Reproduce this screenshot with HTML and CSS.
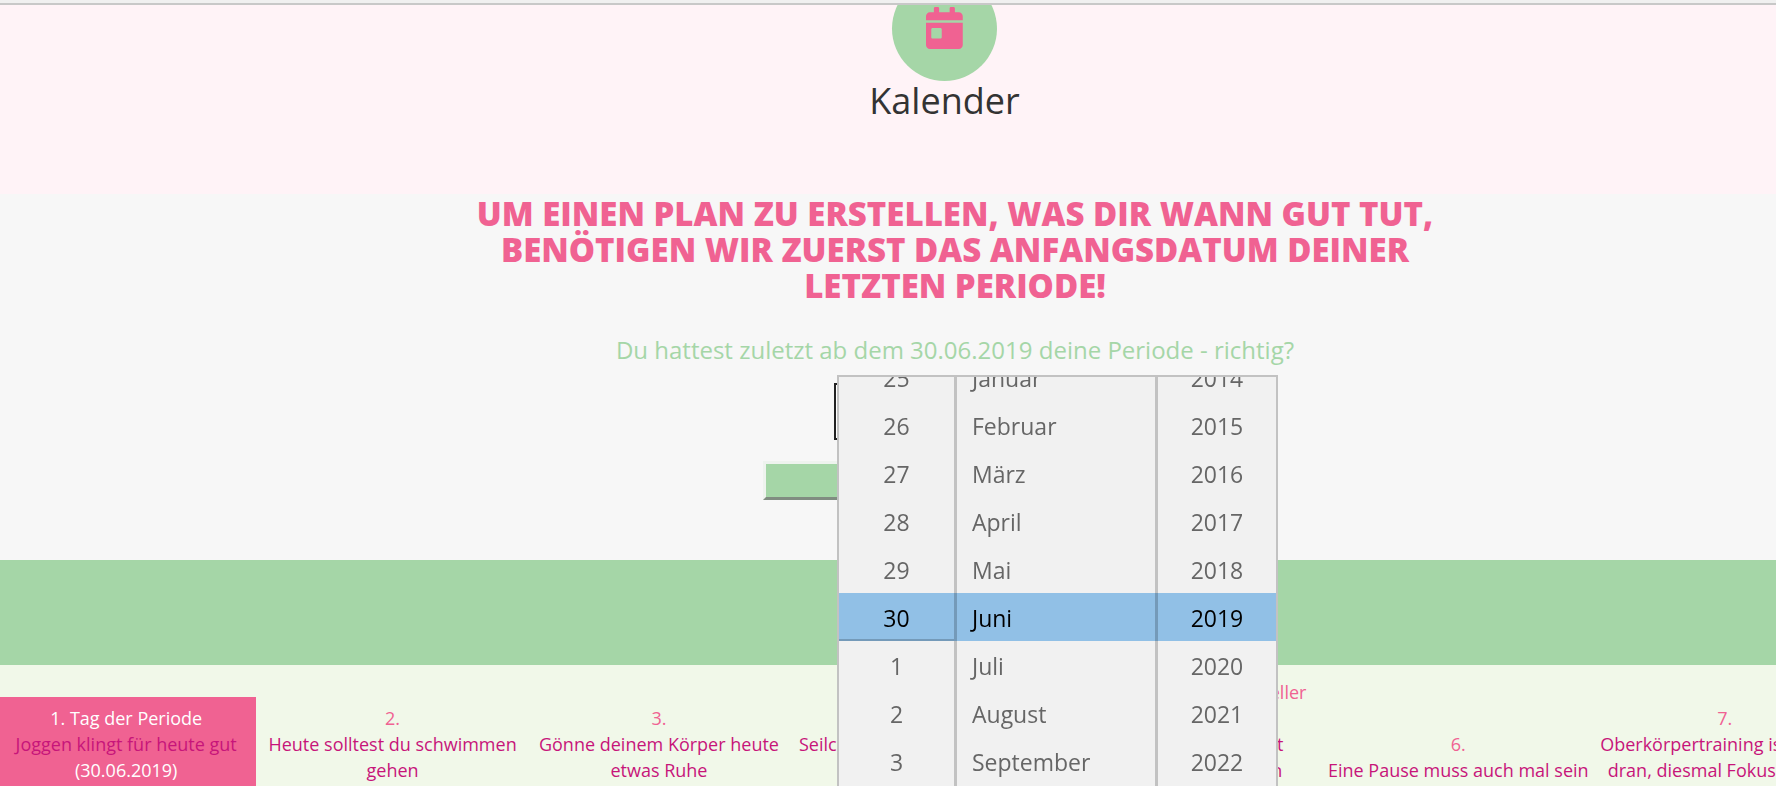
FILE: index.html
```html
<!DOCTYPE html>
<html lang="de">
<head>
<meta charset="utf-8">
<meta name="viewport" content="width=device-width, initial-scale=1">
<title>Kalender</title>
<link rel="stylesheet" href="styles.css">
</head>
<body>
<div class="topbar"></div>
<main class="page">
  <header class="hero">
    <div class="hero-badge">
      <svg class="hero-icon" viewBox="0 0 448 512" aria-hidden="true"><path fill="currentColor" d="M0 464c0 26.500 21.500 48 48 48h352c26.500 0 48-21.500 48-48V192H0v272zm64-192c0-8.800 7.200-16 16-16h96c8.800 0 16 7.200 16 16v96c0 8.800-7.200 16-16 16H80c-8.800 0-16-7.200-16-16v-96zM400 64h-48V16c0-8.800-7.200-16-16-16h-32c-8.800 0-16 7.200-16 16v48H160V16c0-8.800-7.200-16-16-16h-32c-8.800 0-16 7.200-16 16v48H48C21.500 64 0 85.500 0 112v48h448v-48c0-26.500-21.500-48-48-48z"/></svg>
    </div>
    <h1 class="hero-title">Kalender</h1>
  </header>

  <section class="plan">
    <h2 class="plan-title">Um einen Plan zu erstellen, was dir wann gut tut, benötigen wir zuerst das Anfangsdatum deiner letzten Periode!</h2>
    <form class="plan-form">
      <label class="plan-question" for="start">Du hattest zuletzt ab dem 30.06.2019 deine Periode - richtig?</label>
      <div class="date-field">
        <input class="date-input" id="start" type="text" value="30.06.2019">
        <div class="picker">
          <div class="picker-col">
            <button type="button" class="option">25</button>
            <button type="button" class="option">26</button>
            <button type="button" class="option">27</button>
            <button type="button" class="option">28</button>
            <button type="button" class="option">29</button>
            <button type="button" class="option option-selected option-focus">30</button>
            <button type="button" class="option">1</button>
            <button type="button" class="option">2</button>
            <button type="button" class="option">3</button>
          </div>
          <div class="picker-col picker-months">
            <button type="button" class="option">Januar</button>
            <button type="button" class="option">Februar</button>
            <button type="button" class="option">März</button>
            <button type="button" class="option">April</button>
            <button type="button" class="option">Mai</button>
            <button type="button" class="option option-selected">Juni</button>
            <button type="button" class="option">Juli</button>
            <button type="button" class="option">August</button>
            <button type="button" class="option">September</button>
          </div>
          <div class="picker-col">
            <button type="button" class="option">2014</button>
            <button type="button" class="option">2015</button>
            <button type="button" class="option">2016</button>
            <button type="button" class="option">2017</button>
            <button type="button" class="option">2018</button>
            <button type="button" class="option option-selected">2019</button>
            <button type="button" class="option">2020</button>
            <button type="button" class="option">2021</button>
            <button type="button" class="option">2022</button>
          </div>
          <div class="picker-highlight"></div>
        </div>
      </div>
      <button class="submit" type="submit" aria-label="Plan erstellen"></button>
    </form>
  </section>

  <div class="band"></div>

  <section class="days">
    <article class="day day-first"><span class="day-number">1. Tag der Periode</span><br>Joggen klingt für heute gut<br><span class="day-number">(30.06.2019)</span></article>
    <article class="day"><span class="day-number">2.</span><br>Heute solltest du schwimmen<br>gehen</article>
    <article class="day"><span class="day-number">3.</span><br>Gönne deinem Körper heute<br>etwas Ruhe</article>
    <article class="day"><span class="day-number">4.</span><br>Seilchenspringen ist heute gut<br>für dich</article>
    <article class="day"><span class="day-number">5. Tag, Heute dein aktueller<br>Tag</span><br>Heute solltest du Rast<br>einlegen oder einfach</article>
    <article class="day"><span class="day-number">6.</span><br>Eine Pause muss auch mal sein</article>
    <article class="day"><span class="day-number">7.</span><br>Oberkörpertraining ist wieder<br>dran, diesmal Fokus Rücken</article>
  </section>
</main>
</body>
</html>
```
FILE: styles.css
```css
* {
  box-sizing: border-box;
}

body {
  margin: 0;
  height: 100vh;
  overflow: hidden;
  background: #f1f8e9;
  color: #333;
  font-family: "Open Sans", "Noto Sans", sans-serif;
  font-size: 18px;
  line-height: 26px;
}

.topbar {
  height: 5px;
  background: #f0f0f0;
  border-bottom: 2px solid #c8c8c8;
}

/* The page is wider than the window and runs off its right edge. */
.page {
  width: calc(100% + 113px);
}

.hero {
  display: flex;
  flex-direction: column;
  align-items: center;
  overflow: hidden;
  padding-bottom: 73px;
  background: #fff3f7;
}

.hero-badge {
  display: flex;
  align-items: center;
  justify-content: center;
  width: 105px;
  height: 105px;
  margin-top: -29px;
  padding-bottom: 2px;
  border-radius: 50%;
  background: #a5d6a7;
  color: #f06292;
}

.hero-icon {
  height: 42px;
}

.hero-title {
  margin: 0;
  font-size: 36px;
  font-weight: 400;
  line-height: 40px;
}

.plan {
  display: flex;
  flex-direction: column;
  align-items: center;
  padding: 2px 0 60px 21px;
  background: #f7f7f7;
}

.plan-title {
  max-width: 1000px;
  margin: 0 0 28px;
  color: #f06292;
  font-size: 33px;
  font-weight: 800;
  line-height: 36px;
  text-align: center;
  text-transform: uppercase;
}

.plan-form {
  display: flex;
  flex-direction: column;
  align-items: center;
}

.plan-question {
  margin-bottom: 15px;
  color: #a5d6a7;
  font-size: 24px;
  line-height: 36px;
}

.date-field {
  position: relative;
  width: 242px;
  margin-bottom: 21px;
}

.date-input {
  display: block;
  width: 100%;
  height: 57px;
  padding: 0 12px;
  border: 2px solid #222;
  background: #fff;
  font: inherit;
}

.submit {
  width: 384px;
  height: 39px;
  border: 3px solid;
  border-color: #eef3ee #8d9a8e #808d81 #eef3ee;
  background: #a5d6a7;
}

.picker {
  position: absolute;
  top: -8px;
  left: 3px;
  z-index: 1;
  display: grid;
  grid-template-columns: 118px 201px 118px;
  height: 440px;
  overflow: hidden;
  border: 2px solid #c2c2c2;
  background: #f1f1f1;
}

.picker-col {
  display: flex;
  flex-direction: column;
  margin-top: -24px;
}

.picker-col:not(:nth-child(3)) {
  border-right: 3px solid #c2c2c2;
}

.option {
  flex: none;
  height: 48px;
  padding: 2px 0 0;
  border: 0;
  background: none;
  color: #666;
  font: inherit;
  font-size: 23px;
  text-align: center;
}

.picker-months .option {
  padding-left: 15px;
  text-align: left;
}

.option-selected {
  color: #000;
}

.option-focus {
  box-shadow: inset 0 -2px #c2c2c2;
}

.picker-highlight {
  position: absolute;
  top: 216px;
  right: 0;
  left: 0;
  height: 48px;
  background: #99cbf4;
  mix-blend-mode: multiply;
  pointer-events: none;
}

.band {
  height: 105px;
  background: #a5d6a7;
}

.days {
  display: grid;
  grid-template-columns: repeat(7, 1fr);
  column-gap: 6px;
  align-items: end;
  margin-left: -4px;
  padding: 6px 34px 0 0;
  background: #f1f8e9;
}

.day {
  padding: 8px 0;
  color: #c7157a;
  text-align: center;
  white-space: nowrap;
}

.day-number {
  color: #f06292;
}

.day-first {
  background: #f06292;
}

.day-first .day-number {
  color: #fff;
}
```
